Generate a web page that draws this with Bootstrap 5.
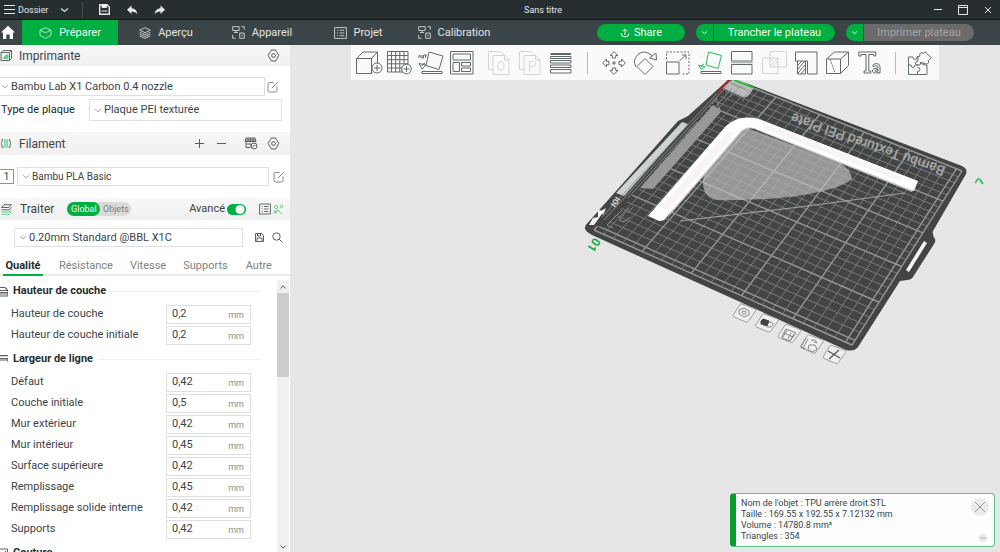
<!DOCTYPE html>
<html lang="fr">
<head>
<meta charset="utf-8">
<meta name="viewport" content="width=device-width, initial-scale=1">
<title>Sans titre</title>
<link href="https://cdn.jsdelivr.net/npm/bootstrap@5.3.0/dist/css/bootstrap.min.css" rel="stylesheet">
<style>
:root { --green: #00ae42; --ink: #3b4446; }
body { font-family: Roboto, "Liberation Sans", sans-serif; font-size: 11px; line-height: 16px; color: var(--ink); background: #e6e6e6; }
svg { display: block; flex: none; fill: none; stroke: currentColor; }
button { background: none; border: 0; padding: 0; color: inherit; font-size: inherit; }
a { color: inherit; text-decoration: none; }
.titlebar { height: 20px; background: #262e30; color: #e4e8e8; border-bottom: 1px solid #121617; font-size: 9px; }
.titlebar .win-title { left: 0; right: 0; pointer-events: none; padding-left: 86px; }
.titlebar .rule { width: 1px; height: 16px; background: #444c4e; }
.mainnav { height: 25px; background: #3b4446; color: #e2e5e6; }
.mainnav .tab-link { width: 96px; gap: 7px; }
.mainnav .tab-link svg { color: #c3c8c9; }
.mainnav .tab-link.active { background: var(--green); color: #eafff0; }
.mainnav .tab-link.active svg { color: #a5e6bd; }
.pill { height: 17px; background: var(--green); color: #f2fff6; line-height: 17px; }
.pill:disabled { background: #6b6b6b; color: #a3a6a6; }
.round-l { border-radius: 9px 0 0 9px; } .round-r { border-radius: 0 9px 9px 0; } .round-a { border-radius: 9px; }
.sidebar { width: 290px; background: #fff; }
.sidebar button svg { opacity: .85; }
.head { height: 21px; background: linear-gradient(#f7f7f7, #f0f0f0); font-size: 12px; }
.head > svg { opacity: .8; }
.field { border: 1px solid #dfdfdf; background: #fff; }
.field svg { color: #aaa; }
.field select { appearance: none; border: 0; padding: 0; background: none; color: var(--ink); outline: 0; width: 100%; min-width: 0; }
.slot { width: 14px; height: 15px; border: 1px solid #8d9496; border-left: 0; font-size: 10px; line-height: 13px; }
.scope { background: #dadada; border-radius: 7px; height: 14px; font-size: 9px; line-height: 14px; color: #808080; width: 64px; }
.scope .on { background: var(--green); color: #eafff0; border-radius: 7px; width: 33px; }
.adv { appearance: none; width: 19px; height: 11px; border-radius: 6px; margin: 0; background: radial-gradient(circle at 13px 50%, #fff 4px, var(--green) 5px); }
.subtabs { height: 22px; border-bottom: 2px solid #ececec; color: #7c8384; }
.subtabs a { height: 22px; line-height: 24px; }
.subtabs .active { color: #262e30; font-weight: 700; border-bottom: 2px solid var(--green); }
.params h2 { font-size: 11px; line-height: 16px; font-weight: 700; color: #262e30; margin: 0; gap: 5px; }
.params h2 svg { opacity: .75; }
.params h2 i { height: 1px; background: #efefef; }
.params .group { padding: 6px 0 7px; }
.params .prm { height: 18px; margin-bottom: 3px; padding-left: 11px; }
.params .prm:last-child { margin-bottom: 0; }
.params label { width: 155px; }
.params .field { width: 85px; height: 19px; }
.params input { border: 0; padding: 0 0 0 5px; width: 50px; color: var(--ink); outline: 0; background: none; }
.unit { font-size: 9px; color: #8a8f90; padding: 2px 6px 0 0; }
.track { width: 12px; background: #f0f0f0; margin-right: 1px; }
.thumb { height: 84px; background: #cdcdcd; }
.tools { height: 35px; background: #fafafa; color: #626a6c; padding: 0 3px 0 2px; }
.tools button { width: 31px; } .tools .wide button { width: 32px; }
.tools svg { margin: auto; }
.tools .sep { width: 1px; height: 22px; background: #bbb; }
.tools button:disabled { color: #d4d4d4; }
.scene { inset: 0; width: 100%; height: 100%; }
.info { right: 5px; bottom: 5px; width: 265px; height: 54px; background: #fcfdfc; border: 1px solid #5cc481; border-left: 6px solid #0a9b33; border-radius: 4px; font-size: 9px; line-height: 11px; padding: 4px 5px 4px 5px; }
.info .disc { width: 18px; height: 18px; border-radius: 9px; background: #ececec; color: #9a9a9a; }
.info .dot { width: 8px; height: 8px; border-radius: 4px; background: #e8e8e8; color: #bbb; margin-right: 2px; }
</style>
</head>
<body class="vh-100 d-flex flex-column overflow-hidden">

<svg width="0" height="0" class="position-absolute">
  <defs>
    <symbol id="chev" viewBox="0 0 8 5"><path d="M1 1.200 4 3.800 7 1.200"/></symbol>
    <symbol id="gear" viewBox="0 0 13 13"><path d="M4.300 1h4.400l.8 1.600 2.300 3.900-2.300 3.900-.8 1.600H4.300l-.8-1.600L1.200 6.500l2.300-3.900z"/><circle cx="6.500" cy="6.500" r="1.900"/></symbol>
    <symbol id="edit" viewBox="0 0 12 12"><path d="M6.500 1.500H2.500Q1 1.500 1 3v6.500Q1 11 2.500 11H8.500Q10 11 10 9.500V5.500M5 7 10.800 1.200"/></symbol>
    <symbol id="device" viewBox="0 0 13 13"><path d="M.7.7h6.500v3.800H.7zM4 4.500v2M2 6.500h4M9.500.7h2.800v3M.7 9v3.300h3M7.700 7h4.600v5.300H7.700zM10 8.500v1.800"/></symbol>
    <symbol id="list" viewBox="0 0 13 12"><path d="M.6.6h11.800v10.800H.6zM3 3.300h1M5.500 3.300h4.700M3 6h1M5.500 6h4.700M3 8.700h1M5.500 8.700h4.700"/></symbol>
  </defs>
</svg>

<header class="titlebar flex-shrink-0 d-flex align-items-center position-relative">
  <button class="d-flex align-items-center ps-1" style="gap:3px" aria-label="Dossier"><svg width="11" height="11" viewBox="0 0 11 11"><path d="M0 1.500h11M0 5.500h11M0 9.500h11"/></svg>Dossier</button>
  <button style="margin-left:12px" aria-label="Menu"><svg width="9" height="6"><use href="#chev"/></svg></button>
  <span class="rule" style="margin-left:13px"></span>
  <button class="ms-3" aria-label="Enregistrer"><svg width="11" height="11" viewBox="0 0 11 11"><path d="M.7.7H8l2.300 2.300v7.300H.7z" stroke-width="1.400"/><path d="M3 1v2.500h4.500V1" fill="#fff"/><path d="M2.500 7h6"/></svg></button>
  <button class="ms-3" aria-label="Annuler"><svg width="12" height="10" viewBox="0 0 11 10"><path d="M5 .5v2.700q5.500.3 5.700 6Q9 6.500 5 6.500V9L.5 4.700z" fill="currentColor" stroke="none"/></svg></button>
  <button class="ms-3" aria-label="Rétablir"><svg width="12" height="10" viewBox="0 0 11 10"><path d="M6 .5v2.700Q.5 3.500.3 9.200 2 6.500 6 6.500V9l4.500-4.300z" fill="currentColor" stroke="none"/></svg></button>
  <div class="win-title position-absolute text-center">Sans titre</div>
  <div class="ms-auto d-flex align-items-center gap-3 pe-2">
    <button aria-label="Réduire"><svg width="8" height="10"><path d="M0 4.500h8"/></svg></button>
    <button aria-label="Agrandir"><svg width="10" height="10"><path d="M.5.500h9v9h-9zM.5 2.500h9"/></svg></button>
    <button aria-label="Fermer"><svg width="8" height="8"><path d="M1 1l6 6M7 1 1 7"/></svg></button>
  </div>
</header>

<nav class="mainnav flex-shrink-0 d-flex align-items-center">
  <a href="#" class="h-100 d-flex align-items-center ps-0" style="width:22px" aria-label="Accueil"><svg width="16" height="15" viewBox="0 0 16 15"><path d="M8 .8 15 7.500h-2V14H9.700V9.500H6.300V14H3V7.500H1z" fill="#fff" stroke="none"/></svg></a>
  <a href="#" class="tab-link active h-100 d-flex align-items-center justify-content-center"><svg width="13" height="12" viewBox="0 0 13 12"><path d="M6.500.7 12 3.200v5.300l-5.500 2.800L1 8.500V3.200zM1 3.200l5.500 2.600L12 3.200"/></svg>Préparer</a>
  <a href="#" class="tab-link h-100 d-flex align-items-center justify-content-center"><svg width="12" height="12" viewBox="0 0 12 12"><path d="M6 .7l5.300 2.500L6 5.700.7 3.200zM.7 5.300 6 7.700l5.300-2.400M.7 7.200 6 9.600l5.300-2.400M.7 9 6 11.400 11.300 9"/></svg>Aperçu</a>
  <a href="#" class="tab-link h-100 d-flex align-items-center justify-content-center"><svg width="13" height="13"><use href="#device"/></svg>Appareil</a>
  <a href="#" class="tab-link h-100 d-flex align-items-center justify-content-center"><svg width="13" height="12"><use href="#list"/></svg>Projet</a>
  <a href="#" class="tab-link h-100 d-flex align-items-center justify-content-center"><svg width="13" height="13"><use href="#device"/></svg>Calibration</a>
  <div class="ms-auto d-flex" style="padding-right:26px">
    <button class="pill round-a d-flex align-items-center justify-content-center gap-1" style="width:88px"><svg width="10" height="10" viewBox="0 0 10 10"><path d="M1 5q0 4 4 4t4-4M5 7V1M2.700 3.200 5 1l2.300 2.200"/></svg>Share</button>
    <button class="pill round-l d-flex align-items-center justify-content-center" style="width:17px;margin-left:11px" aria-label="Options de tranchage"><svg width="7" height="5"><use href="#chev"/></svg></button>
    <button class="pill round-r" style="width:121px;margin-left:1px">Trancher le plateau</button>
    <button class="pill round-l d-flex align-items-center justify-content-center" style="width:17px;margin-left:11px" aria-label="Options d'impression"><svg width="7" height="5"><use href="#chev"/></svg></button>
    <button class="pill round-r" style="width:110px;margin-left:1px" disabled>Imprimer plateau</button>
  </div>
</nav>

<div class="d-flex flex-grow-1 overflow-hidden">
<aside class="sidebar flex-shrink-0 d-flex flex-column overflow-hidden">
  <div class="head flex-shrink-0 d-flex align-items-center"><svg width="12" height="11" viewBox="0 0 12 11"><path d="M1 2.500 3 .5h8.500v8L9.500 10.500H1zM9.500 2.500v8M1 2.500h8.500l2-2"/><path d="M3 8.500 6 5h2v3.500z" fill="#3fca72" stroke="#3fca72"/></svg><span style="margin-left:7px">Imprimante</span>
    <button class="ms-auto" style="margin-right:10px" aria-label="Réglages imprimante"><svg width="13" height="13"><use href="#gear"/></svg></button></div>
  <div class="d-flex align-items-center" style="margin-top:11px">
    <div class="field border-start-0 d-flex align-items-center" style="width:265px;height:19px;padding-left:1px;gap:2px"><svg width="8" height="5"><use href="#chev"/></svg><select aria-label="Imprimante"><option>Bambu Lab X1 Carbon 0.4 nozzle</option></select></div>
    <button class="text-secondary" style="margin-left:2px" aria-label="Modifier"><svg width="12" height="12"><use href="#edit"/></svg></button>
  </div>
  <div class="d-flex align-items-center" style="margin-top:3px">
    <label for="plate" class="text-dark" style="width:89px;padding-left:1px">Type de plaque</label>
    <div class="field d-flex align-items-center" style="width:193px;height:22px;padding-left:4px;gap:2px"><svg width="8" height="5"><use href="#chev"/></svg><select id="plate"><option>Plaque PEI texturée</option></select></div>
  </div>
  <div class="head flex-shrink-0 d-flex align-items-center" style="margin-top:11px;height:23px"><svg width="12" height="11" viewBox="0 0 12 11"><path d="M2.500 1q-2 4.500 0 9M9.500 1q2 4.500 0 9"/><path d="M4 1q1.500 4.500 0 9M8 1q-1.500 4.500 0 9M6 1v9" stroke="#3fca72"/></svg><span style="margin-left:7px">Filament</span>
    <button class="ms-auto" aria-label="Ajouter"><svg width="9" height="9"><path d="M0 4.500h9M4.500 0v9"/></svg></button>
    <button style="margin-left:13px" aria-label="Retirer"><svg width="9" height="9"><path d="M0 4.500h9"/></svg></button>
    <button style="margin-left:18px" aria-label="Synchroniser"><svg width="14" height="13" viewBox="0 0 14 13"><path d="M2 1h9l1 3.500H1zM2 5v5.500h4M4 1v3M6.500 1v3M9 1v3M2 3h10M3 7h4v3"/><circle cx="10" cy="9" r="3"/><path d="M8.500 10 11.500 8"/></svg></button>
    <button style="margin:0 10px 0 9px" aria-label="Réglages filament"><svg width="13" height="13"><use href="#gear"/></svg></button></div>
  <div class="d-flex align-items-center" style="margin-top:12px">
    <div class="slot text-center">1</div>
    <div class="field d-flex align-items-center" style="width:252px;height:19px;margin-left:3px;padding-left:4px;gap:2px;font-size:10px"><svg width="8" height="5"><use href="#chev"/></svg><select aria-label="Filament"><option>Bambu PLA Basic</option></select></div>
    <button class="text-secondary" style="margin-left:4px" aria-label="Modifier"><svg width="12" height="12"><use href="#edit"/></svg></button>
  </div>
  <div class="head flex-shrink-0 d-flex align-items-center" style="margin-top:12px;height:22px"><svg width="13" height="11" viewBox="0 0 13 11"><path d="M4 .7h7.500L9 3.500H1.500zM1.500 5.800H9l2.500-2.600"/><path d="M1.500 8H9l2.500-2.600M1.500 10.200H9l2.500-2.600" stroke="#3fca72"/></svg><span style="margin-left:7px">Traiter</span>
    <div class="scope d-flex text-center" style="margin-left:13px"><button class="on">Global</button><button class="flex-grow-1">Objets</button></div>
    <label for="adv" class="ms-auto" style="font-size:11px">Avancé</label><input type="checkbox" role="switch" id="adv" class="adv" checked style="margin-left:2px">
    <button style="margin-left:13px" aria-label="Liste"><svg width="12" height="12"><use href="#list"/></svg></button>
    <button style="margin:0 6px 0 2px;color:#55c47c" aria-label="Comparer"><svg width="11" height="11" viewBox="0 0 11 11"><circle cx="3" cy="3" r="1.700"/><circle cx="8.500" cy="2.500" r="1.200"/><path d="M1 9 5 6l4 4"/><circle cx="2.500" cy="8" r="1.200"/></svg></button></div>
  <div class="d-flex align-items-center" style="margin-top:8px">
    <div class="field d-flex align-items-center" style="width:229px;height:19px;margin-left:14px;padding-left:4px;gap:2px"><svg width="8" height="5"><use href="#chev"/></svg><select aria-label="Traitement"><option>0.20mm Standard @BBL X1C</option></select></div>
    <button style="margin-left:12px" aria-label="Enregistrer le profil"><svg width="9" height="9" viewBox="0 0 9 9"><path d="M.5.500h6l2 2v6h-8zM2.500.5v2.500h3V.5M2 8.500V5h5v3.500"/></svg></button>
    <button style="margin-left:8px" aria-label="Rechercher"><svg width="11" height="11" viewBox="0 0 11 11"><circle cx="4.500" cy="4.500" r="3.700"/><path d="M7.200 7.200 10.500 10.500"/></svg></button>
  </div>
  <nav class="subtabs flex-shrink-0 d-flex" style="margin-top:7px">
    <a href="#" class="active text-center" style="width:40px;margin-left:3px">Qualité</a>
    <a href="#" style="margin-left:16px">Résistance</a>
    <a href="#" style="margin-left:17px">Vitesse</a>
    <a href="#" style="margin-left:17px">Supports</a>
    <a href="#" style="margin-left:18px">Autre</a>
  </nav>
  <div class="d-flex flex-grow-1 overflow-hidden" style="padding-top:4px">
    <form class="params flex-grow-1 overflow-hidden" style="padding-top:3px">
      <h2 class="d-flex align-items-center"><svg width="8" height="11" viewBox="0 0 8 11"><path d="M0 1.500h5l3 3H0M0 6.500h8M0 8h8M0 10h8V4" stroke-width="1.200"/></svg>Hauteur de couche<i class="flex-grow-1 me-3"></i></h2>
      <div class="group" data-rows="Hauteur de couche|0,2;Hauteur de couche initiale|0,2"></div>
      <h2 class="d-flex align-items-center"><svg width="8" height="8" viewBox="0 0 8 8"><path d="M0 .6h8M0 3.500h8v3.500M0 5h8" stroke-width="1.200"/></svg>Largeur de ligne<i class="flex-grow-1 me-3"></i></h2>
      <div class="group" data-rows="Défaut|0,42;Couche initiale|0,5;Mur extérieur|0,42;Mur intérieur|0,45;Surface supérieure|0,42;Remplissage|0,45;Remplissage solide interne|0,42;Supports|0,42"></div>
      <h2 class="d-flex align-items-center"><svg width="8" height="11" viewBox="0 0 8 11"><path d="M0 1h7.500v9H0M1 9 6 3"/></svg>Couture<i class="flex-grow-1 me-3"></i></h2>
    </form>
    <div class="track d-flex flex-column">
      <button class="d-flex justify-content-center align-items-center" style="height:13px" aria-label="Défiler vers le haut"><svg width="6" height="4"><path d="M.5 3.500 3 .8l2.500 2.700"/></svg></button>
      <div class="thumb"></div>
      <button class="mt-auto d-flex justify-content-center align-items-center" style="height:10px" aria-label="Défiler vers le bas"><svg width="6" height="4"><path d="M.5.500 3 3.200 5.500.5"/></svg></button>
    </div>
  </div>
</aside>

<main class="flex-grow-1 position-relative overflow-hidden">
  <svg class="scene position-absolute" viewBox="290 45 710 507" preserveAspectRatio="xMidYMin meet" stroke="none">
    <defs><clipPath id="shade"><path d="M744 127 L785 142 L836 161 Q851 168 852 179 Q840 190 790 197 Q750 201 717 200 Q704 198 703 184 Q702 176 708 168z"/></clipPath></defs>
    <g stroke="none">
    <path fill="#424544" d="M728 80 H738 L962 166 Q968 169 966 174 L933 231 Q932 234 935 239 Q936 241 934 244 L913 277 Q911 280 907 280 L900 281 L858 347 Q854 352 846 350 L592 235 Q582 230 586 225 L680 122 Q682 120 692 119z"/>
    <path fill="#f5f5f5" d="M924 241l3 2-18 29-3-2z"/>
    </g>
    <path id="fine" stroke="#7e8180" stroke-width=".9"/>
    <path id="bold" stroke="#949796" stroke-width="1.400"/>
    <g stroke="none">
    <path fill="#424544" d="M728 80h7l-18 20-5 4-72 83-36 40-18 -2 92-104 10-5z"/>
    <path fill="#cfd2d2" d="M682 122l6 2-64 72-8-3z"/>
    <path fill="#969998" d="M713 105l8 5-1 3-67 76-13-1z"/>
    <path fill="#c4c6c5" fill-opacity=".9" d="M732 80h8l14 8-5 7q-2 3-6 2l-21-9z"/>
    <path fill="#f4f4f4" d="M589 225l4-7 5-1v-7l6 1-10 14zM601 211l5-3-3 7z"/>
    </g>
    <path d="M727 86 604 220M724 86 602 217M697 122 628 198M732 88 716 106M712 104l4-6 4 12" stroke="#8f9291" stroke-width=".9"/>
    <path d="M622 210l-15 15 6 3M629 208l-10 12 5 2 6-5M633 207l-5 6" stroke="#8c8f8e"/>
    <path d="M748 92 742 102M740 86 730 97M745 89l-17-8M752 92l-21-8" stroke="#8b8e8d" stroke-width=".7"/>
    <g clip-path="url(#shade)">
      <path fill="#999796" d="M700 120h160v90H700z"/>
      <use href="#fine" opacity=".6" style="filter:brightness(1.400)"/><use href="#bold" opacity=".8" style="filter:brightness(1.250)"/>
    </g>
    <path d="M680 221 L800 207 L905 193" stroke="#a39f9f" stroke-width="1.200"/>
    <path fill="#c3c1c1" stroke="none" d="M664 222 742 132Q747 127 754 129L912 192 914 188 752 122 733 126z"/>
    <path fill="#fff" stroke="none" d="M648 216 726 126Q739 114 759 119L918 181 914 191 754 128Q746 126 741 131L664 220Q660 222 657 220z"/>
    <path fill="#f8f4f4" stroke="none" d="M661 206 721 139Q729 130 733 131L730 140 670 208Q662 213 661 206zM764 123 902 177 900 181 762 128z"/>
    <path d="M729 80 717 94" stroke="#c21f28" stroke-width="1.500"/>
    <path d="M734 80 754 88" stroke="#13c22a" stroke-width="1.700"/>
    <text transform="translate(946 167) rotate(199.500)" font-size="14" font-weight="500" fill="#a4a7a6" stroke="none">Bambu Textured PEI Plate</text>
    <text transform="translate(594 237) rotate(122)" font-size="12" font-weight="700" fill="#12ae45" stroke="none">01</text>
    <text transform="translate(616 196) rotate(125)" font-size="8" font-weight="700" fill="#ddd" stroke="none">IOI</text>
    <path d="M975 183l3-4q2-1 5 5l-3-3" stroke="#40bf70" stroke-width="1.600"/>
    <g stroke="#9b9e9e" fill="#efefef">
      <path id="pad" d="M740 304.500q1-1 2-.5l13 5q1.500.7.5 2l-7 10q-1 1.500-2.500 1l-12-5q-1.500-.7-.7-2z"/>
      <use href="#pad" x="22.500" y="10"/><use href="#pad" x="45" y="20.500"/><use href="#pad" x="67.500" y="31"/><use href="#pad" x="90" y="41.500"/>
    </g>
    <g stroke="#858888">
      <path d="M739 310l5-2 5 3v4l-5 2-5-3z"/><ellipse cx="744" cy="312.500" rx="2" ry="1.500"/>
      <path d="M761 321l2-2 6 2-2 5-6-2z" fill="#444" stroke="#444"/><path d="M769 322q5 0 4 3t-6 2"/>
      <path d="M783 334l3-5 10 4-6 8-8-3zM784 333l9 4M787 330l-4 7M791 333l-3 6M794 334l-4 7"/>
      <path d="M806 338l-5 9 5 2M808 339l-5 9M811 341q4-3 6 2l-3-1M809 345l6 0 2 4-4 3-5-2z"/>
      <path d="M828 351 840 358M839 350 829 359" stroke="#555" stroke-width="1.200"/>
    </g>
  </svg>

  <div class="position-relative d-flex justify-content-center">
  <div class="tools d-flex align-items-center" role="toolbar">
    <div class="d-flex">
      <button aria-label="Ajouter"><svg width="28" height="24" viewBox="0 0 28 24"><path d="M1.500 7.500h15v15h-15zM1.500 7.500 8 1h14.500l-6 6.500M22.500 1v11M16.500 22.500l1-1"/><circle cx="22" cy="17" r="5" fill="#fafafa"/><path d="M19 17h6M22 14v6"/></svg></button>
      <button aria-label="Ajouter un plateau"><svg width="25" height="24" viewBox="0 0 25 24"><path d="M.5.500h20.500v20.500H.5zM4.500.5v20.500M8.700.5v20.500M12.800.5v20.500M17 .5v20.500M.5 4.500H21M.5 8.700H21M.5 12.800H21M.5 17H21"/><circle cx="19.500" cy="18" r="4.800" fill="#fafafa"/><path d="M16.500 18h6M19.500 15v6"/></svg></button>
      <button aria-label="Orientation auto"><svg width="26" height="24" viewBox="0 0 26 24"><path d="M11 1l14 4-4 13.500-13-4zM4 20.500h20v2H4zM7 12q-3 1-3 3M1 12.500l3 5.500 4-4z"/><path d="M0 7l1.500-3L3 7M4 4v3h1.500V4M6 4h3M7.500 4v3"/></svg></button>
      <button aria-label="Arranger"><svg width="24" height="24" viewBox="0 0 24 24"><path d="M.5.500h22.500v22.500H.5zM3 3h17.500v6H3zM3 11.500h6.500v9H3zM11.500 11.500h9v3.500h-9zM11.500 17h9v3.500h-9z"/></svg></button>
    </div>
    <div class="d-flex" style="margin-left:6px">
      <button disabled aria-label="Objets"><svg width="22" height="24" viewBox="0 0 22 24"><path d="M5 18.500H.5V.5H12l4 4M5 4.500h12l4 4v15H5zM16.500 4.500V9H21"/><ellipse cx="13" cy="15" rx="3" ry="4.500"/></svg></button>
      <button disabled aria-label="Pièces"><svg width="22" height="24" viewBox="0 0 22 24"><path d="M5 18.500H.5V.5H12l4 4M5 4.500h12l4 4v15H5zM16.500 4.500V9H21M10.500 20v-9.500H14q2.500 0 2.500 2.500T14 15.500h-3.500"/></svg></button>
      <button aria-label="Hauteur de couche variable"><svg width="22" height="24" viewBox="0 0 22 24"><path d="M.5 3h20.500" stroke-width="2"/><path d="M.5 5.500h20.500v2H.5zM.5 9.500h20.500v2.500H.5zM.5 14h20.500v2.500H.5zM.5 18.500h20.500v3.500H.5z"/></svg></button>
    </div>
    <span class="sep" style="margin:0 10px 0 11px"></span>
    <div class="d-flex wide">
      <button aria-label="Déplacer"><svg width="24" height="24" viewBox="0 0 24 24"><path d="M12 .7 16 4.500h-2.300V7h-3.400V4.500H8zM12 23.300 16 19.500h-2.300V17h-3.400v2.500H8zM.7 12 4.500 8v2.300H7v3.400H4.500V16zM23.300 12 19.500 8v2.300H17v3.400h2.500V16zM11 11h2v2h-2z"/></svg></button>
      <button aria-label="Pivoter"><svg width="26" height="24" viewBox="0 0 26 24"><path d="M12 7.500 20 15.500l-8 8-8-8zM3 16Q-1 9 5 3.500T19 4.500M16.500 7 23.500 9 23 2z"/></svg></button>
      <button aria-label="Échelle"><svg width="24" height="24" viewBox="0 0 24 24"><path d="M.5 11h12.500v12H.5zM13.500 10 19 4.500M16 4h4v4"/><path d="M.5 8V1H23v22h-8" stroke-dasharray="2 1.500"/></svg></button>
      <button style="color:#2bb85c" aria-label="Poser à plat"><svg width="24" height="24" viewBox="0 0 24 24"><path d="M10.500 1 23.500 4.500 20 17.500 8 14zM6 13q-2 .5-3 3M.7 14l2.500 4.500L7 16z"/><path d="M3 20.500h20v2H3z" stroke="#626a6c"/></svg></button>
      <button aria-label="Couper"><svg width="22" height="24" viewBox="0 0 22 24"><path d="M.5.500h20.500v9.500H.5zM.5 13.500h20.500V23H.5z"/><path d="M0 11.700h22" opacity=".6"/></svg></button>
      <button disabled aria-label="Booléen"><svg width="25" height="24" viewBox="0 0 25 24"><path d="M8 .5h16.500v15.500H8zM.5 7h15.500v15.500H.5zM8 11l4-4M8 15l7.500-8M10 16l6-6"/></svg></button>
      <button aria-label="Peinture de supports"><svg width="23" height="24" viewBox="0 0 23 24"><path d="M.5 1h21.500v22H12.500V10H.5z"/><path d="M2.500 10v13h8V10M3 14l4-4M3 18l7-8M3 22l7-8M6 23l4-5"/></svg></button>
      <button aria-label="Couture"><svg width="24" height="24" viewBox="0 0 24 24"><path d="M.5 8h14v14.500H.5zM.5 8 8.500 1H22.500L14.500 8M22.500 1v13.500l-8 8"/><path d="M4 8l5 14" stroke-dasharray="2 1"/></svg></button>
      <button aria-label="Texte"><svg width="24" height="24" viewBox="0 0 24 24"><path d="M.8 1h17v4h-2V3.500h-5V20h2v2H6v-2h2V3.500H3V5H.8zM14.500 15q1-2.500 4-2.500t3.500 3V22h-2v-1q-1.500 1.500-4 1-2-1-1.500-3t5.500-2q0-2.500-1.500-2.500t-2 1zM20 18.500q-3 0-3 1.300t3 .2z"/></svg></button>
    </div>
    <span class="sep" style="margin:0 8px 0 9px"></span>
    <div class="d-flex wide">
      <button aria-label="Assemblage"><svg width="24" height="24" viewBox="0 0 24 24"><path d="M.5 6H5q0 2.500 2 2.500T9 6h1v4q-2.500 0-2.500 2T10 14H7q0 2.500-2 2.500T3 14H.5zM.5 14v9.500h9v-3q2.500 0 2.500-2T9.500 16.500M9.500 23.500H19V14h-3q0-2.500-2-2.500T12 14h-2M9 6l3-1q-1-2 .5-3t3 .5L17 .7l6.300 6-3 3q1 2-.5 3t-3-.5L15 13.500l-3-2.500"/></svg></button>
    </div>
  </div>
  </div>

  <section class="info position-absolute d-flex">
    <div class="flex-grow-1">Nom de l'objet : TPU arrère droit.STL<br>Taille : 169.55 x 192.55 x 7.12132 mm<br>Volume : 14780.8 mm³<br>Triangles : 354</div>
    <div class="d-flex flex-column justify-content-between align-items-end">
      <button class="disc d-flex align-items-center justify-content-center" aria-label="Fermer"><svg width="12" height="12"><path d="M1 1l10 10M11 1 1 11"/></svg></button>
      <button class="dot d-flex align-items-center justify-content-center" aria-label="Réduire"><svg width="6" height="2"><path d="M0 1h6"/></svg></button>
    </div>
  </section>
</main>
</div>

<script>
// Parameter rows: "label|value" pairs separated by ";"
document.querySelectorAll('[data-rows]').forEach(function (box, b) {
  box.innerHTML = box.dataset.rows.split(';').map(function (r, i) {
    var p = r.split('|'), id = 'p' + b + '_' + i;
    return '<div class="prm d-flex align-items-center"><label for="' + id + '">' + p[0] + '</label>' +
      '<div class="field d-flex align-items-center"><input id="' + id + '" value="' + p[1] + '"><span class="unit ms-auto">mm</span></div></div>';
  }).join('');
});
// Build plate grid: the 256 mm square projected onto the four screen corners
var c = [[733, 80], [962, 171], [852, 345], [594, 230]];
var dx1 = c[1][0] - c[2][0], dx2 = c[3][0] - c[2][0], sx = c[0][0] - c[1][0] + c[2][0] - c[3][0];
var dy1 = c[1][1] - c[2][1], dy2 = c[3][1] - c[2][1], sy = c[0][1] - c[1][1] + c[2][1] - c[3][1];
var det = dx1 * dy2 - dx2 * dy1, g = (sx * dy2 - dx2 * sy) / det, h = (dx1 * sy - sx * dy1) / det;
function pt(u, v) {
  u /= 256; v /= 256;
  var w = g * u + h * v + 1;
  return ((c[1][0] - c[0][0] + g * c[1][0]) * u + (c[3][0] - c[0][0] + h * c[3][0]) * v + c[0][0]) / w + ' ' +
    ((c[1][1] - c[0][1] + g * c[1][1]) * u + (c[3][1] - c[0][1] + h * c[3][1]) * v + c[0][1]) / w;
}
var fine = '', bold = '';
for (var t = 0; t <= 250; t += 10) {
  var d = 'M' + pt(t, 0) + 'L' + pt(t, 256) + 'M' + pt(0, t) + 'L' + pt(256, t);
  if (t % 50) fine += d; else bold += d;
}
bold += 'M' + pt(256, 0) + 'L' + pt(256, 256) + 'L' + pt(0, 256);
document.getElementById('fine').setAttribute('d', fine);
document.getElementById('bold').setAttribute('d', bold);
</script>
<script src="https://cdn.jsdelivr.net/npm/bootstrap@5.3.0/dist/js/bootstrap.bundle.min.js"></script>
</body>
</html>
